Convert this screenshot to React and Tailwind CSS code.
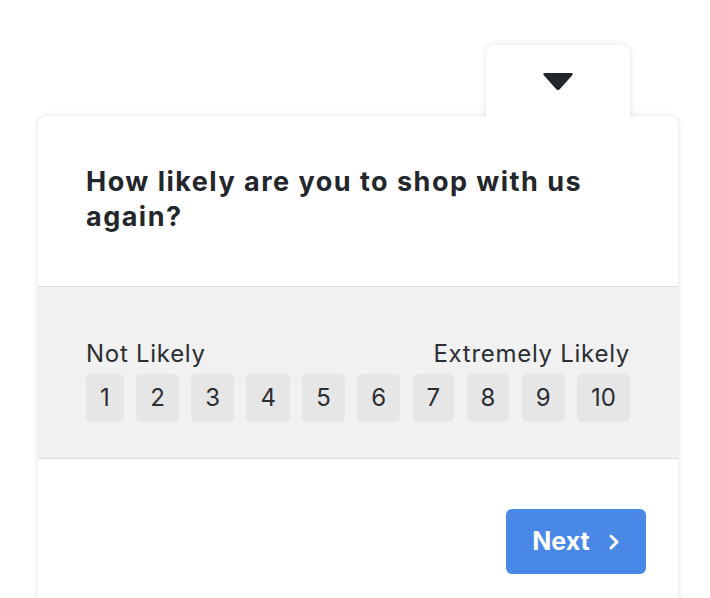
export default function App() {
  const scale = [1, 2, 3, 4, 5, 6, 7, 8, 9, 10]

  return (
    <div className="h-screen bg-white pt-[45px] px-[38px] font-['Inter','Noto_Sans',sans-serif] text-[#23262b] overflow-hidden">
      <div className="w-[640px]">
        {/* collapse tab */}
        <div className="flex justify-end pr-12">
          <button className="relative z-10 -mb-[3px] w-[144px] h-[74px] bg-white rounded-t-[9px] shadow-[0_0_7px_rgba(0,0,0,0.12)] [clip-path:inset(-20px_-20px_0_-20px)] flex justify-center pt-[28px]">
            <svg width="32" height="18" viewBox="0 0 32 18">
              <path d="M3 0 H29 Q32 0 30 2.5 L17.5 16.5 Q16 18 14.5 16.5 L2 2.5 Q0 0 3 0 Z" fill="#23262b" />
            </svg>
          </button>
        </div>

        {/* survey card */}
        <div className="bg-white rounded-t-[9px] shadow-[0_0_7px_rgba(0,0,0,0.12)]">
          <div className="px-12 pt-12 pb-[52px]">
            <h2 className="text-[27px] leading-[35px] font-bold tracking-[0.055em]">
              How likely are you to shop with us again?
            </h2>
          </div>

          <div className="bg-[#f1f1f1] border-y border-[#dcdcdc] px-12 pt-[52px] pb-[36px]">
            <div className="flex justify-between text-[24px] leading-[30px] tracking-[0.03em] text-[#2b2e33]">
              <span>Not Likely</span>
              <span>Extremely Likely</span>
            </div>
            <div className="mt-[5px] flex justify-between">
              {scale.map(n => (
                <button
                  key={n}
                  className="h-12 px-[14px] rounded-[5px] bg-[#e6e6e6] text-[24px] text-[#2b2e33] flex items-center justify-center"
                >
                  {n}
                </button>
              ))}
            </div>
          </div>

          <div className="flex justify-end pt-[50px] pr-8 pb-20">
            <button className="w-[140px] h-[65px] rounded-[6px] bg-[#4a88e8] text-white text-[25px] font-bold flex items-center justify-center gap-[18px]">
              Next
              <svg width="12" height="18" viewBox="0 0 12 18" fill="none">
                <path d="M3 3 L9 9 L3 15" stroke="white" strokeWidth="3" strokeLinecap="round" strokeLinejoin="round" />
              </svg>
            </button>
          </div>
        </div>
      </div>
    </div>
  )
}
